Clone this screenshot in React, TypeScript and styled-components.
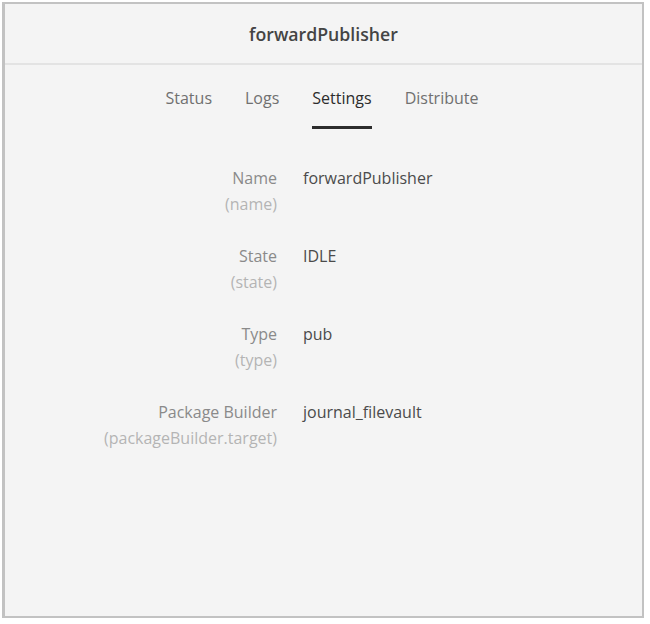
import React, { useState } from "react";
import styled, { createGlobalStyle } from "styled-components";

const GlobalStyle = createGlobalStyle`
  html, body {
    margin: 0;
    padding: 0;
    background: #ffffff;
  }
  body {
    font-family: "Open Sans", "Liberation Sans", sans-serif;
  }
`;

const Frame = styled.div`
  box-sizing: border-box;
  margin: 2px 0 0 2px;
  width: 642px;
  height: 616px;
  background: #f4f4f4;
  border: 2px solid #c2c2c2;
  border-left-width: 3px;
  display: flex;
  flex-direction: column;
`;

const Header = styled.div`
  height: 59px;
  display: flex;
  align-items: center;
  justify-content: center;
  border-bottom: 2px solid #e3e3e3;
`;

const Title = styled.h1`
  margin: 0;
  font-size: 17.7px;
  font-weight: 600;
  color: #444444;
`;

const TabBar = styled.nav`
  display: flex;
  justify-content: center;
  gap: 33px;
  padding-top: 23px;
  padding-right: 3px;
`;

const Tab = styled.button<{ active: boolean }>`
  background: none;
  border: none;
  padding: 0 0 17px;
  margin: 0;
  font-family: inherit;
  font-size: 16px;
  line-height: 21px;
  cursor: pointer;
  color: ${({ active }) => (active ? "#2c2c2c" : "#707070")};
  border-bottom: 3px solid ${({ active }) => (active ? "#2c2c2c" : "transparent")};
`;

const Fields = styled.dl`
  margin: 36px 0 0;
  display: grid;
  grid-template-columns: 272px 1fr;
  column-gap: 26px;
  row-gap: 26px;
`;

const LabelCell = styled.dt`
  margin: 0;
  text-align: right;
  display: flex;
  flex-direction: column;
`;

const Label = styled.span`
  font-size: 16px;
  line-height: 26px;
  color: #8a8a8a;
`;

const Key = styled.span`
  font-size: 16px;
  line-height: 26px;
  color: #b4b4b4;
`;

const Value = styled.dd`
  margin: 0;
  font-size: 16px;
  line-height: 26px;
  color: #4b4b4b;
`;

const tabs = ["Status", "Logs", "Settings", "Distribute"];

const settings = [
  { label: "Name", key: "name", value: "forwardPublisher" },
  { label: "State", key: "state", value: "IDLE" },
  { label: "Type", key: "type", value: "pub" },
  { label: "Package Builder", key: "packageBuilder.target", value: "journal_filevault" },
];

const App: React.FC = () => {
  const [active, setActive] = useState("Settings");

  return (
    <>
      <GlobalStyle />
      <Frame>
        <Header>
          <Title>forwardPublisher</Title>
        </Header>
        <TabBar>
          {tabs.map((t) => (
            <Tab key={t} active={t === active} onClick={() => setActive(t)}>
              {t}
            </Tab>
          ))}
        </TabBar>
        <Fields>
          {settings.map((s) => (
            <React.Fragment key={s.key}>
              <LabelCell>
                <Label>{s.label}</Label>
                <Key>({s.key})</Key>
              </LabelCell>
              <Value>{s.value}</Value>
            </React.Fragment>
          ))}
        </Fields>
      </Frame>
    </>
  );
};

export default App;
